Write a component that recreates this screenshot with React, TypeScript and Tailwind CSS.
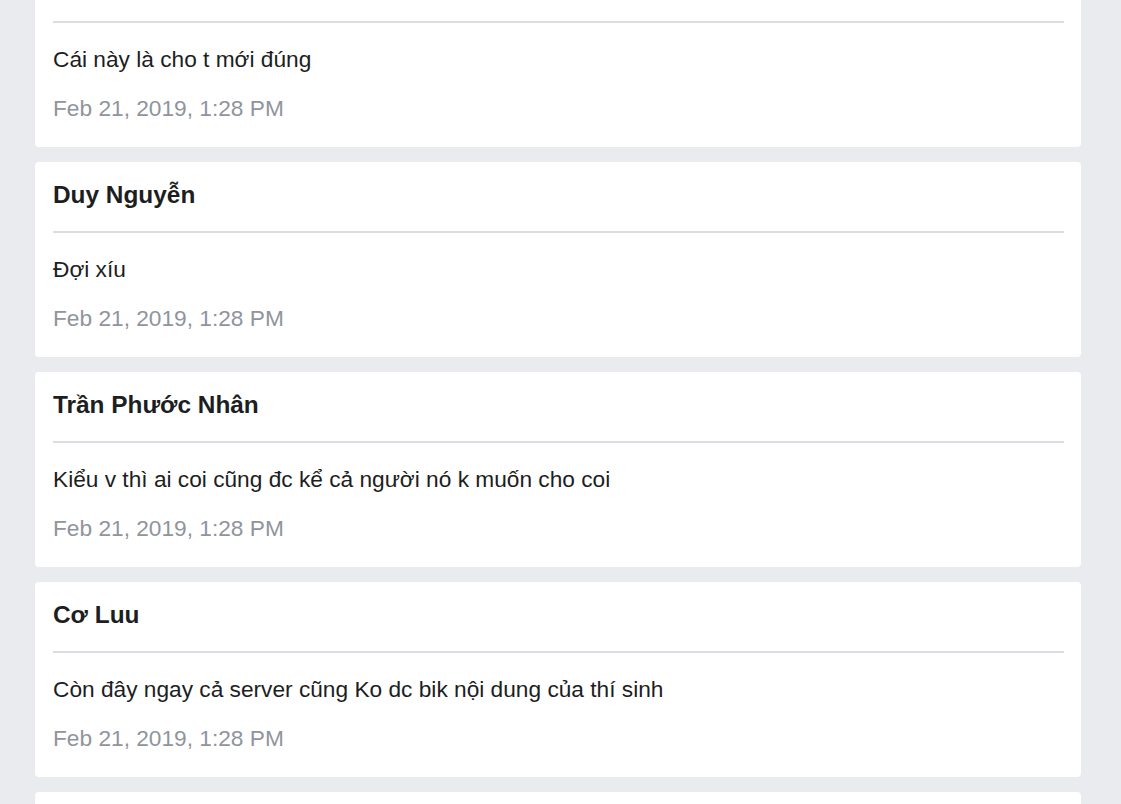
import React from "react";

type Comment = { author: string; text: string; time: string };

const comments: Comment[] = [
  { author: "Trần Phước Nhân", text: "Cái này là cho t mới đúng", time: "Feb 21, 2019, 1:28 PM" },
  { author: "Duy Nguyễn", text: "Đợi xíu", time: "Feb 21, 2019, 1:28 PM" },
  { author: "Trần Phước Nhân", text: "Kiểu v thì ai coi cũng đc kể cả người nó k muốn cho coi", time: "Feb 21, 2019, 1:28 PM" },
  { author: "Cơ Luu", text: "Còn đây ngay cả server cũng Ko dc bik nội dung của thí sinh", time: "Feb 21, 2019, 1:28 PM" },
  { author: "Duy Nguyễn", text: "Ừ", time: "Feb 21, 2019, 1:29 PM" },
];

function CommentCard({ comment }: { comment: Comment }) {
  return (
    <div className="bg-white rounded-[4px] pl-[18px] pr-[17px] pt-[18px] pb-[25px]">
      {/* Author */}
      <div className="text-[24.4px] leading-[29px] font-bold text-[#1c1e21] mb-[22px]">
        {comment.author}
      </div>
      <div className="h-[2px] bg-[#dadde1]" />

      {/* Message */}
      <p className="mt-[23px] text-[22.7px] leading-[27px] text-[#1c1e21]">{comment.text}</p>

      {/* Time */}
      <div className="mt-[22px] text-[22.7px] leading-[27px] text-[#90949c]">{comment.time}</div>
    </div>
  );
}

export default function App() {
  return (
    <div
      className="min-h-screen h-[804px] overflow-hidden bg-[#e9ebee]"
      style={{ fontFamily: '"Liberation Sans", Arial, sans-serif' }}
    >
      <div className="-mt-[48px] ml-[35px] w-[1046px] flex flex-col gap-[15px]">
        {comments.map((c, i) => (
          <CommentCard key={i} comment={c} />
        ))}
      </div>
    </div>
  );
}
